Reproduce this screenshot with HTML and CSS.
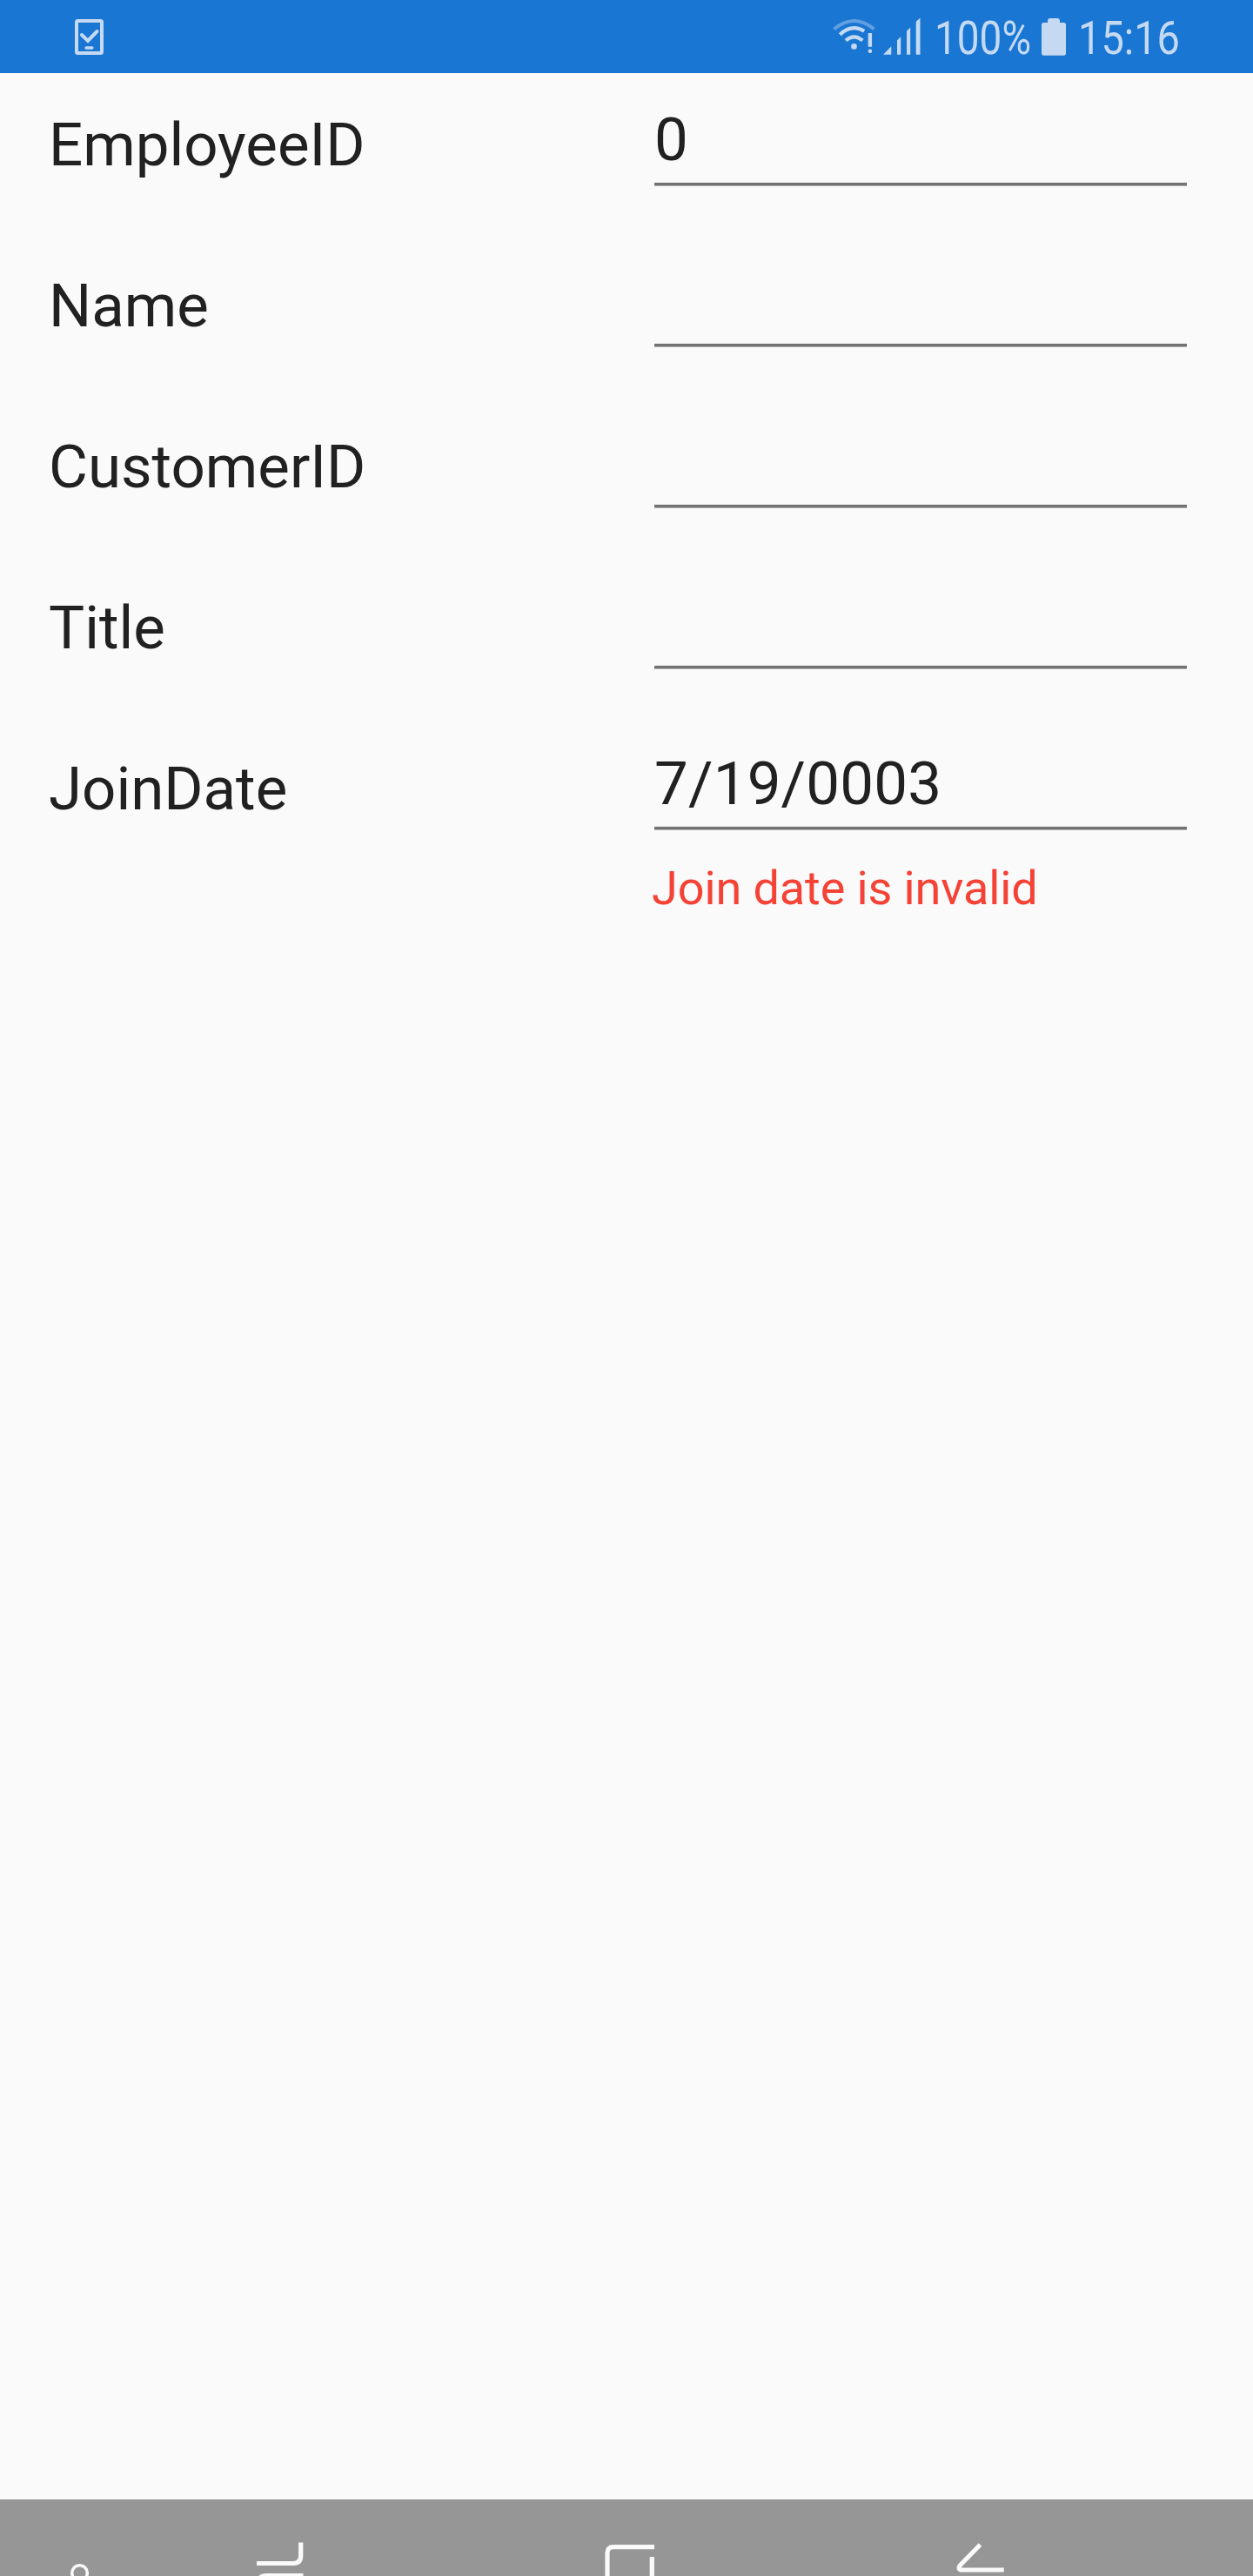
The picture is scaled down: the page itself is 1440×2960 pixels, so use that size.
FILE: index.html
```html
<!DOCTYPE html>
<html lang="en">
<head>
<meta charset="utf-8">
<title>Employee form</title>
<link rel="stylesheet" href="styles.css">
</head>
<body>
<div class="screen">
  <header class="status">
    <svg class="notice" width="33" height="41" viewBox="0 0 33 41" fill="none" stroke="currentColor">
      <rect x="2" y="2" width="29" height="37" rx="1.5" stroke-width="4"/>
      <path d="M8 18l7 7L25.500 14" stroke-width="4" stroke-linecap="round"/>
      <path d="M13.200 33h6.600" stroke-width="3.600" stroke-linecap="round"/>
    </svg>
    <svg class="signals" width="102" height="84" viewBox="956 0 102 84" fill="none" stroke="currentColor">
      <path d="M958.500 33.500Q981.500 14.500 1004.500 33.500" stroke-width="4" opacity=".42"/>
      <path d="M965.300 39.700Q979 27 993.200 35.800M972 46.500Q981.500 38.300 991.300 46.500" stroke-width="4.200"/>
      <circle cx="981.500" cy="53.400" r="3.300" fill="currentColor" stroke="none"/>
      <path d="M997.700 38h4.400v15.700h-4.400zM1015 62.700l9.300-9.400v9.400zM1031 62.700V46.500l4.200-4.200v20.400zM1042 62.700V35.800l4.200-4.200v31.100zM1052.700 62.700V25l4.800-4.500v42.200z" fill="currentColor" stroke="none"/>
      <circle cx="999.900" cy="58.700" r="2.300" fill="currentColor" stroke="none"/>
    </svg>
    <span class="level">100%</span>
    <svg class="battery" width="28" height="43" viewBox="0 0 28 43"><path d="M7 5V3q0-3 3-3h8q3 0 3 3v2h4.500q2.500 0 2.500 2.500v33q0 2.300-2.500 2.300h-23Q0 42.800 0 40.500v-33Q0 5 2.500 5z" fill="currentColor"/></svg>
    <span class="clock">15:16</span>
  </header>
  <main class="form">
    <div class="row"><div class="label">EmployeeID</div><div class="field"><div class="value">0</div></div></div>
    <div class="row"><div class="label">Name</div><div class="field"><div class="value"></div></div></div>
    <div class="row"><div class="label">CustomerID</div><div class="field"><div class="value"></div></div></div>
    <div class="row"><div class="label">Title</div><div class="field"><div class="value"></div></div></div>
    <div class="row"><div class="label">JoinDate</div><div class="field"><div class="value">7/19/0003</div><div class="error">Join date is invalid</div></div></div>
  </main>
  <footer class="nav">
    <svg width="1440" height="88" viewBox="0 2872 1440 88" fill="none" stroke="#fafafa">
      <circle cx="91.500" cy="2956.500" r="8.800" stroke-width="3.500"/>
      <path d="M295 2945.500h42q8.700 0 8.700-8.700V2921.500M348.500 2959.500H306q-8.700 0-8.700 8.700" stroke-width="5.200"/>
      <path d="M752 2926.700h-47q-7 0-7 7V2961M749.300 2938v23" stroke-width="5.200"/>
      <path d="M1126.500 2924l-23 23.500q-3.500 5.500 2 5.500h48.200" stroke-width="5.200"/>
    </svg>
  </footer>
</div>
</body>
</html>
```
FILE: styles.css
```css
body {
  margin: 0;
  font-family: Roboto, "Liberation Sans", sans-serif;
}

.screen {
  display: flex;
  flex-direction: column;
  width: 1440px;
  height: 2960px;
  overflow: hidden;
  background: #fafafa;
  color: #212121;
}

svg {
  display: block;
  flex: none;
}

.status {
  display: flex;
  align-items: center;
  box-sizing: border-box;
  height: 84px;
  padding-left: 86px;
  background: #1976d2;
  color: #c5daf2;
  font-size: 54px;
  line-height: 64px;
}

.notice {
  margin-right: 837px;
}

.signals {
  margin-right: 16px;
}

/* Condensed digits: natural width, squeezed from the left edge */
.level,
.clock {
  flex: none;
  margin-top: 4px;
  transform-origin: left;
}

.level {
  width: 131px;
  margin-right: -8px;
  transform: scaleX(0.85);
}

.battery {
  margin-right: 14px;
}

.clock {
  width: 135px;
  transform: scaleX(0.87);
}

.form {
  flex: 1;
}

.row {
  display: grid;
  grid-template-columns: 696px 612px;
  height: 185px;
  padding-left: 56px;
  font-size: 69px;
}

.label {
  line-height: 166px;
}

.value {
  height: 100px;
  padding: 25px 0 5px;
  line-height: 104px;
  letter-spacing: 0.2px;
  background: linear-gradient(#ececec 1px, #727272 1px 4px, #b0b0b0 4px) bottom / 100% 5px no-repeat;
}

.error {
  margin: 35px 0 0 -3px;
  font-size: 54px;
  line-height: 64px;
  letter-spacing: -0.1px;
  color: #f44336;
  white-space: nowrap;
}

.nav {
  height: 88px;
  background: #969696;
}
```
